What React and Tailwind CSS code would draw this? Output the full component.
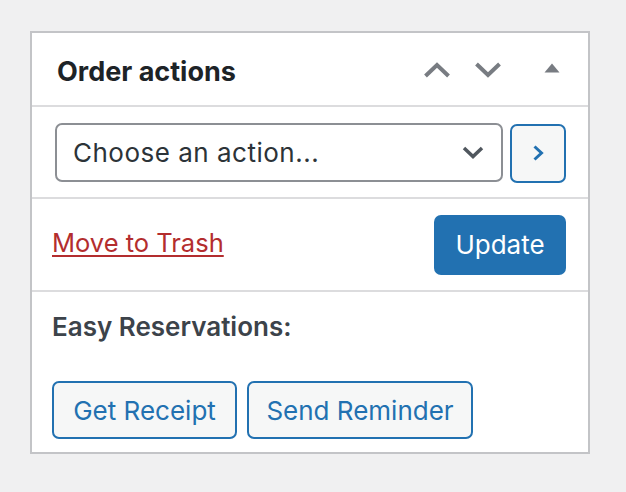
import React from "react";

const font = { fontFamily: "Inter, 'Noto Sans', sans-serif" };

const OrderActions = () => {
    return (
        <div className="min-h-[492px] w-full bg-[#f0f0f1] pt-[31px] pl-[30px]" style={font}>
            <div className="w-[560px] h-[423px] bg-white border-2 border-[#c3c4c7] flex flex-col">
                {/* header */}
                <div className="h-[74px] flex items-center border-b-2 border-[#dcdcde] pl-[25px] pr-[28px]">
                    <h2 className="text-[27px] leading-[32px] font-bold text-[#1d2327] flex-1 mt-[5px]">Order actions</h2>
                    <div className="flex items-center">
                        <svg width="28" height="16" viewBox="0 0 28 16" className="mt-[1px]">
                            <polyline points="2.5,14 14,3 25.5,14" fill="none" stroke="#787c82" strokeWidth="4" />
                        </svg>
                        <svg width="28" height="16" viewBox="0 0 28 16" className="ml-[23px] mt-[1px]">
                            <polyline points="2.5,2 14,13 25.5,2" fill="none" stroke="#787c82" strokeWidth="4" />
                        </svg>
                        <svg width="16" height="10" viewBox="0 0 16 10" className="ml-[42px] -mt-[2px]">
                            <polygon points="0.5,9.5 8,0.5 15.5,9.5" fill="#787c82" />
                        </svg>
                    </div>
                </div>

                {/* action select */}
                <div className="h-[92px] flex items-center border-b-2 border-[#dcdcde] pl-[23px] pr-[22px]">
                    <div className="w-[448px] h-[59px] border-2 border-[#8c8f94] rounded-[7px] flex items-center pl-[16px] pr-[17px]">
                        <span className="flex-1 text-[26px] text-[#2c3338] tracking-[0.5px]">Choose an action...</span>
                        <svg width="22" height="13" viewBox="0 0 22 13">
                            <polyline points="2,2 11,10.5 20,2" fill="none" stroke="#50575e" strokeWidth="3.5" />
                        </svg>
                    </div>
                    <button className="ml-[7px] w-[56px] h-[59px] mt-[2px] border-2 border-[#2271b1] bg-[#f6f7f7] rounded-[7px] flex items-center justify-center">
                        <svg width="12" height="16" viewBox="0 0 12 16">
                            <polyline points="2.5,1.5 9.5,8 2.5,14.5" fill="none" stroke="#2271b1" strokeWidth="3" />
                        </svg>
                    </button>
                </div>

                {/* trash / update */}
                <div className="h-[93px] flex items-center justify-between border-b-2 border-[#dcdcde] pl-[20px] pr-[22px]">
                    <a href="#" className="text-[25.5px] leading-[32px] -mt-[4px] text-[#b32d2e] underline underline-offset-[3px] decoration-2">Move to Trash</a>
                    <button className="w-[132px] h-[60px] bg-[#2271b1] rounded-[7px] text-white text-[26px]">Update</button>
                </div>

                {/* easy reservations */}
                <div className="flex-1 flex flex-col pl-[20px] pt-[19px]">
                    <div className="text-[26px] leading-[32px] font-semibold text-[#3c434a]">Easy Reservations:</div>
                    <div className="flex gap-[10px] mt-[38px]">
                        <button className="w-[185px] h-[58px] border-2 border-[#2271b1] bg-[#f6f7f7] rounded-[7px] text-[#2271b1] text-[26px]">Get Receipt</button>
                        <button className="w-[226px] h-[58px] border-2 border-[#2271b1] bg-[#f6f7f7] rounded-[7px] text-[#2271b1] text-[26px]">Send Reminder</button>
                    </div>
                </div>
            </div>
        </div>
    );
};

export default function App() {
    return <OrderActions />;
}
